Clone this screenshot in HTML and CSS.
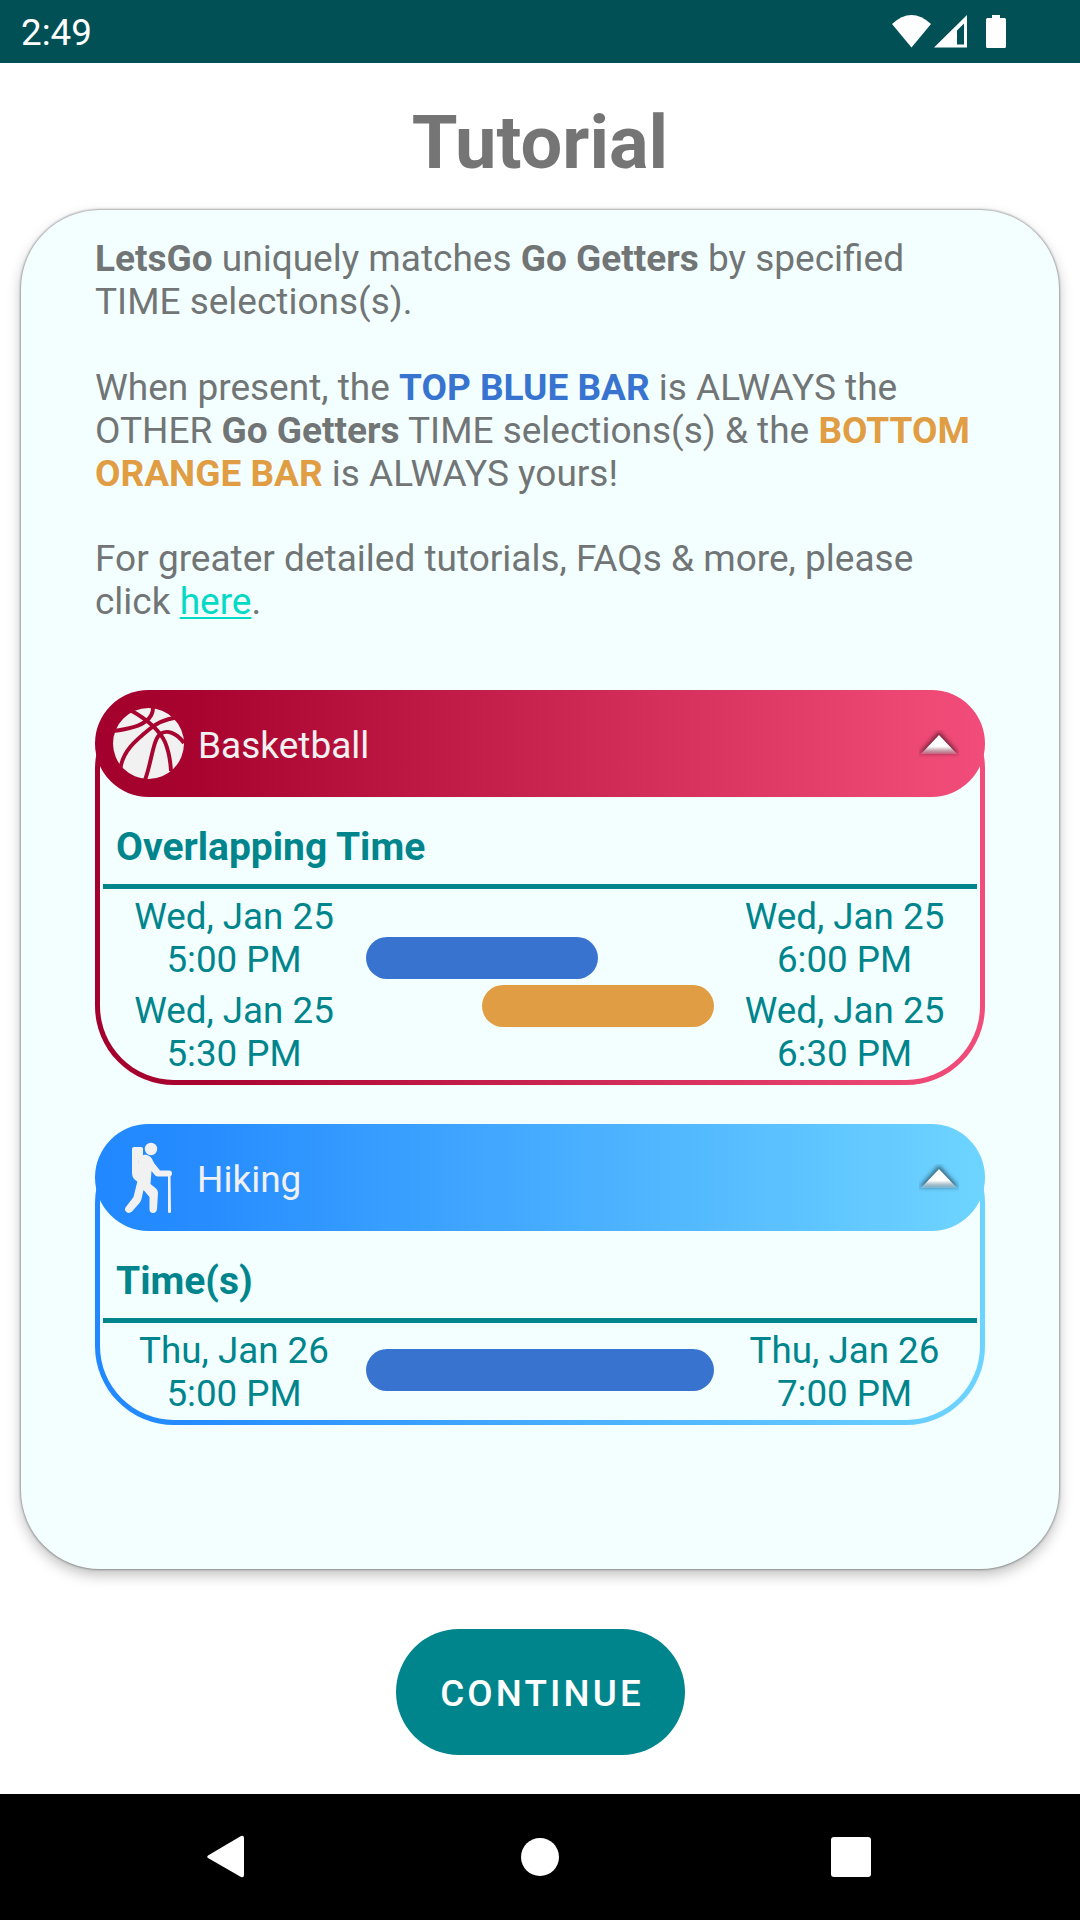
FILE: index.html
```html
<!DOCTYPE html>
<html lang="en">
<head>
<meta charset="utf-8">
<title>Tutorial</title>
<link rel="stylesheet" href="styles.css">
</head>
<body>
<div class="screen">
  <header class="status">
    <span>2:49</span>
    <svg class="status-icons" width="116" height="36" viewBox="0 0 116 36" fill="#fff">
      <path d="M0 10Q19.500-8 39 10L19.500 33.500Z"/>
      <path fill-rule="evenodd" d="M42 33.500L75 1V33.500ZM65 16.500V30.500H72V9.500Z"/>
      <path d="M100 1h8v3h4.500q1.500 0 1.500 1.500v27q0 1.500-1.500 1.500h-17q-1.500 0-1.500-1.500v-27Q94 4 95.500 4H100Z"/>
    </svg>
  </header>
  <main class="content">
    <h1 class="title">Tutorial</h1>
    <section class="panel">
      <div class="intro">
        <p><b>LetsGo</b> uniquely matches <b>Go Getters</b> by specified<br>TIME selections(s).</p>
        <p>When present, the <b class="blue">TOP BLUE BAR</b> is ALWAYS the<br>OTHER <b>Go Getters</b> TIME selections(s) &amp; the <b class="orange">BOTTOM<br>ORANGE BAR</b> is ALWAYS yours!</p>
        <p>For greater detailed tutorials, FAQs &amp; more, please<br>click <a class="link" href="#">here</a>.</p>
      </div>

      <article class="activity basketball">
        <div class="activity-head">
          <svg class="activity-icon" viewBox="0 0 72 72">
            <circle cx="36.500" cy="35.500" r="35.500" fill="#f1f1f1"/>
            <g fill="none" stroke="#a80430" stroke-width="3.900">
              <path d="M19 2.500Q45 17 53 34Q58 46 59 63"/>
              <path d="M1 23Q26 20 34 13Q41 8 41 0"/>
              <path d="M64 9.500Q48 12 37 21.500C23 33 11 43 8.500 60"/>
              <path d="M72 35C64 24 55 22 49 25.500C41 30 40 53 33 72"/>
            </g>
          </svg>
          <span class="activity-name">Basketball</span>
          <svg class="arrow" viewBox="0 0 40 28"><use href="#arrow-up"/></svg>
        </div>
        <h2 class="activity-label">Overlapping Time</h2>
        <div class="times">
          <div class="dates"><p>Wed, Jan 25<br>5:00 PM</p><p>Wed, Jan 25<br>5:30 PM</p></div>
          <div class="bars"><div class="bar bar-blue half"></div><div class="bar bar-orange half late"></div></div>
          <div class="dates end"><p>Wed, Jan 25<br>6:00 PM</p><p>Wed, Jan 25<br>6:30 PM</p></div>
        </div>
      </article>

      <article class="activity hiking">
        <div class="activity-head">
          <svg class="activity-icon" viewBox="-1 0 72 72" fill="#f1f1f1">
            <circle cx="38" cy="7" r="6.200"/>
            <path d="M21 5H28q2 0 2 2v6Q25 17 25 24v16Q19 37 19 31V7q0-2 2-2Z"/>
            <path d="M25 24C25 8 38 12 40 19L41 21L47 28.500H56q3 0 3 3t-3 3H45.500Q43 35 41 32L38.500 29L37.500 42L43 46.500Q45 48 45 51L44 67Q43.500 71 40 71T36.500 67V55L30.500 48L28.500 57Q28 59 26.500 61L19 69.500Q16 72 13.500 70T12.500 65.500L20.500 55L24.500 39Z"/>
            <path d="M55 34h2.500L58 70q0 1-1.500 1T55 70Z"/>
          </svg>
          <span class="activity-name">Hiking</span>
          <svg class="arrow" viewBox="0 0 40 28"><use href="#arrow-up"/></svg>
        </div>
        <h2 class="activity-label">Time(s)</h2>
        <div class="times">
          <div class="dates"><p>Thu, Jan 26<br>5:00 PM</p></div>
          <div class="bars"><div class="bar bar-blue"></div></div>
          <div class="dates end"><p>Thu, Jan 26<br>7:00 PM</p></div>
        </div>
      </article>
    </section>
    <button class="continue" type="button">CONTINUE</button>
  </main>
  <nav class="navbar">
    <svg width="42" height="44" viewBox="0 0 42 44" fill="#fff"><path d="M1 20.500L34 1Q37 0 37 3V40Q37 43 34 42L1 23Q-.5 22 1 20.500Z"/></svg>
    <svg width="40" height="40" viewBox="0 0 40 40" fill="#fff"><circle cx="20" cy="20" r="19"/></svg>
    <svg width="40" height="40" viewBox="0 0 40 40" fill="#fff"><rect width="40" height="40" rx="3"/></svg>
  </nav>
</div>
<svg width="0" height="0" class="defs">
  <defs>
    <linearGradient id="arrow-fill" x1="0" y1="0" x2="0" y2="1">
      <stop offset=".6" stop-color="#fff"/><stop offset="1" stop-color="#fff" stop-opacity=".2"/>
    </linearGradient>
    <filter id="arrow-blur" x="-30%" y="-30%" width="160%" height="160%"><feGaussianBlur stdDeviation="2"/></filter>
    <symbol id="arrow-up" viewBox="0 0 40 28">
      <path d="M20 3L37 22H3Z" fill="#000" fill-opacity=".45" stroke="#000" stroke-opacity=".28" stroke-width="4" filter="url(#arrow-blur)"/>
      <path d="M20 5L38 24H2Z" fill="url(#arrow-fill)"/>
    </symbol>
  </defs>
</svg>
</body>
</html>
```
FILE: styles.css
```css
* { box-sizing: border-box; margin: 0; padding: 0; }
body { font-family: Roboto, sans-serif; font-size: 36.75px; line-height: 43px; background: #fff; color: #717575; }
.screen { display: flex; flex-direction: column; width: 1080px; height: 1920px; }
.status { display: flex; justify-content: space-between; align-items: center; height: 63px; padding: 2px 72px 0 21px; background: #005055; color: #fff; }
.status-icons { margin-bottom: 2px; }
.content { flex: 1; display: flex; flex-direction: column; align-items: center; }
.title { height: 147px; padding-top: 37px; font-size: 74px; line-height: 86px; font-weight: 700; color: #757575; }
.panel { width: 1038px; height: 1359px; padding: 27px 74px 0; border-radius: 79px; background: #f3ffff; box-shadow: 0 0 2px 1px rgba(0,0,0,.3), 0 6px 14px rgba(0,0,0,.25); }
.intro { display: flex; flex-direction: column; gap: 43px; height: 453px; font-size: 37px; line-height: 43px; white-space: nowrap; }
.intro p:last-child { margin-top: -1px; }
.blue { color: #3874cf; }
.orange { color: #e19d43; }
.link { color: #03dac5; text-decoration-thickness: 2px; text-underline-offset: 3px; }
.activity { margin-bottom: 39px; padding: 0 3px; border: 5px solid transparent; border-radius: 79px; background: linear-gradient(#f3ffff, #f3ffff) padding-box, var(--shade) border-box; }
.basketball { --shade: linear-gradient(90deg, #a4002d, #a8042f 12%, #ef4976 94%, #f14c7a); height: 395px; }
.hiking { --shade: linear-gradient(90deg, #2288ff, #258bff 10%, #6bd1ff 96%, #6dd3ff); height: 301px; }
.activity-head { display: flex; align-items: center; height: 107px; margin: -5px -8px 0; padding: 0 26px 0 17px; border-radius: 54px; background: var(--shade); color: #f1f1f1; font-size: 37px; }
.activity-icon { width: 72px; height: 72px; }
.activity-name { flex: 1; padding: 4px 0 0 14px; }
.hiking .activity-name { padding-left: 13px; }
.arrow { width: 40px; height: 28px; }
.activity-label { height: 92px; padding: 27px 13px 0; border-bottom: 5px solid #00858d; font-size: 39px; line-height: 46px; font-weight: 700; color: #00858d; }
.times { display: grid; grid-template-columns: 262px 349px 1fr; color: #00858d; }
.dates { display: flex; flex-direction: column; gap: 8px; padding-top: 6px; text-align: center; }
.end { padding-right: 2px; }
.bars { display: flex; flex-direction: column; justify-content: center; gap: 6px; padding: 2px 0 0 1px; }
.basketball .bars { padding-top: 0; }
.bar { height: 42px; border-radius: 21px; }
.bar-blue { background: #3874cf; }
.bar-orange { background: #e19d43; }
.half { width: 232px; }
.late { align-self: flex-end; }
.continue { width: 289px; height: 126px; margin-top: 60px; padding: 2px 0 0 4px; border: 0; border-radius: 63px; background: #00858d; color: #fff; font: 500 36.75px/43px Roboto, sans-serif; letter-spacing: 3.150px; }
.navbar { display: flex; justify-content: space-between; align-items: center; height: 126px; padding: 0 209px 0 207px; background: #000; }
.defs { position: absolute; }
```
